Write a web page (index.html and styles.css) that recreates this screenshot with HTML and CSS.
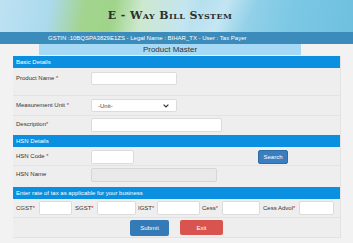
FILE: index.html
```html
<!DOCTYPE html>
<html lang="en">
<head>
<meta charset="utf-8">
<title>E - Way Bill System</title>
<link rel="stylesheet" href="styles.css">
</head>
<body>
<header class="banner">
  <h1 class="title">E - Way Bill System</h1>
</header>
<div class="userbar">GSTIN :10BQSPA3829E1ZS - Legal Name : BIHAR_TX - User : Tax Payer</div>
<div class="page-title">Product Master</div>
<form class="panel">
  <div class="section-head">Basic Details</div>
  <div class="row row-name">
    <label class="lbl">Product Name <span class="req">*</span></label>
    <div class="field"><input class="inp w-name" type="text"></div>
  </div>
  <div class="row row-unit">
    <label class="lbl">Measurement Unit <span class="req">*</span></label>
    <div class="field">
      <div class="select">
        <span>-Unit-</span>
        <svg class="chev" width="6" height="4" viewBox="0 0 6 4"><path d="M0.6 0.6 L3 3 L5.4 0.6" fill="none" stroke="#333" stroke-width="1.2"/></svg>
      </div>
    </div>
  </div>
  <div class="row row-desc">
    <label class="lbl">Description<span class="req">*</span></label>
    <div class="field"><input class="inp w-desc" type="text"></div>
  </div>
  <div class="section-head">HSN Details</div>
  <div class="row row-hsn">
    <label class="lbl">HSN Code <span class="req">*</span></label>
    <div class="field">
      <input class="inp w-hsn" type="text">
      <button type="button" class="btn btn-search">Search</button>
    </div>
  </div>
  <div class="row row-hsnname">
    <label class="lbl">HSN Name</label>
    <div class="field"><input class="inp inp-disabled w-hsnname" type="text" disabled></div>
  </div>
  <div class="section-head">Enter rate of tax as applicable for your business</div>
  <div class="tax-row">
    <label class="tlbl l1">CGST<span class="req">*</span></label><input class="inp t1" type="text">
    <label class="tlbl l2">SGST<span class="req">*</span></label><input class="inp t2" type="text">
    <label class="tlbl l3">IGST<span class="req">*</span></label><input class="inp t3" type="text">
    <label class="tlbl l4">Cess<span class="req">*</span></label><input class="inp t4" type="text">
    <label class="tlbl l5">Cess Advol<span class="req">*</span></label><input class="inp t5" type="text">
  </div>
  <div class="actions">
    <button type="button" class="btn btn-submit">Submit</button>
    <button type="button" class="btn btn-exit">Exit</button>
  </div>
</form>
</body>
</html>
```
FILE: styles.css
```css
* { box-sizing: border-box; }
html, body { margin: 0; padding: 0; }
body {
  width: 353px;
  height: 243px;
  overflow: hidden;
  background: #f2f2f2;
  font-family: "Liberation Sans", Arial, sans-serif;
  color: #333;
}
.banner {
  height: 32px;
  background:
    linear-gradient(115deg, rgba(255,255,255,0) 55%, rgba(255,255,255,0.35) 62%, rgba(255,255,255,0) 70%),
    linear-gradient(100deg, #bde2f2 0%, #acdaee 14%, #a3d48e 24%, #9fd48a 32%, #cde8cf 40%, #c3e5f0 52%, #9ad4ea 66%, #7cc8e4 82%, #6ec0e0 100%);
  display: flex;
  align-items: center;
  justify-content: center;
  padding-right: 13px;
  padding-bottom: 2px;
}
.title {
  margin: 0;
  font-family: "DejaVu Serif", "Liberation Serif", serif;
  font-weight: bold;
  font-variant: small-caps;
  font-size: 11px;
  letter-spacing: 0.4px;
  color: #2e2e2e;
}
.userbar {
  height: 12px;
  background: #3b8cbb;
  color: #fff;
  font-size: 6px;
  line-height: 12px;
  padding-left: 48px;
  white-space: nowrap;
}
.page-title {
  margin-left: 39px;
  width: 262px;
  height: 11px;
  background: #a5d9f6;
  color: #333;
  font-size: 8px;
  line-height: 11px;
  text-align: center;
}
.panel {
  margin: 1px 0 0 13px;
  width: 328px;
  background: #eeeeee;
  border-right: 1px solid #e2e2e2;
}
.section-head {
  height: 12px;
  background: #0b8fe0;
  color: #fff;
  font-size: 6px;
  line-height: 12px;
  padding-left: 3px;
  white-space: nowrap;
}
.row {
  display: grid;
  grid-template-columns: 75px 1fr;
  padding-left: 3px;
  border-bottom: 1px solid #e3e3e3;
}
.row-name { height: 28px; padding-top: 4px; }
.row-unit { height: 20px; padding-top: 3px; }
.row-desc { height: 19px; padding-top: 2px; border-bottom: 0; }
.row-hsn { height: 19px; padding-top: 3px; }
.row-hsnname { height: 21px; padding-top: 2px; border-bottom: 0; }
.lbl {
  font-size: 6px;
  line-height: 8px;
  padding-top: 2px;
  white-space: nowrap;
}
.req { color: #e02020; }
.field { display: flex; align-items: flex-start; }
.inp {
  height: 14px;
  margin: 0;
  padding: 0 3px;
  border: 1px solid #dcdcdc;
  border-radius: 2px;
  background: #fff;
  font-size: 6px;
}
.row-name .inp { height: 13px; }
.w-name { width: 86px; }
.w-desc { width: 131px; }
.w-hsn { width: 43px; }
.w-hsnname { width: 126px; }
.inp-disabled { background: #e9e9e9; border-color: #d6d6d6; }
.select {
  width: 86px;
  height: 13px;
  border: 1px solid #dcdcdc;
  border-radius: 2px;
  background: #fff;
  display: flex;
  align-items: center;
  justify-content: space-between;
  padding: 0 7px 0 6px;
  font-size: 6px;
  color: #444;
}
.btn {
  border: 0;
  margin: 0;
  padding: 0;
  border-radius: 2px;
  color: #fff;
  font-family: "Liberation Sans", Arial, sans-serif;
  font-size: 6px;
  cursor: pointer;
}
.btn-search {
  width: 30px;
  height: 14px;
  margin-left: 124px;
  background: #3a7ebf;
  border: 1px solid #2e6da4;
}
.tax-row {
  display: flex;
  align-items: center;
  height: 19px;
  padding-left: 3px;
  border-bottom: 1px solid #e3e3e3;
}
.tlbl {
  font-size: 6px;
  white-space: nowrap;
  flex: none;
}
.l1 { width: 23px; }
.l2 { width: 22px; }
.l3 { width: 19px; }
.l4 { width: 20px; }
.l5 { width: 36px; }
.tax-row .inp { height: 14px; flex: none; }
.t1 { width: 33px; margin-right: 3px; }
.t2 { width: 39px; margin-right: 2px; }
.t3 { width: 43px; margin-right: 2px; }
.t4 { width: 38px; margin-right: 3px; }
.t5 { width: 35px; }
.actions {
  display: flex;
  justify-content: center;
  gap: 11px;
  height: 20px;
  padding-top: 2px;
  border-bottom: 1px solid #e3e3e3;
}
.btn-submit {
  width: 39px;
  height: 16px;
  background: #337ab7;
}
.btn-exit {
  width: 43px;
  height: 15px;
  background: #d9534f;
}
```
